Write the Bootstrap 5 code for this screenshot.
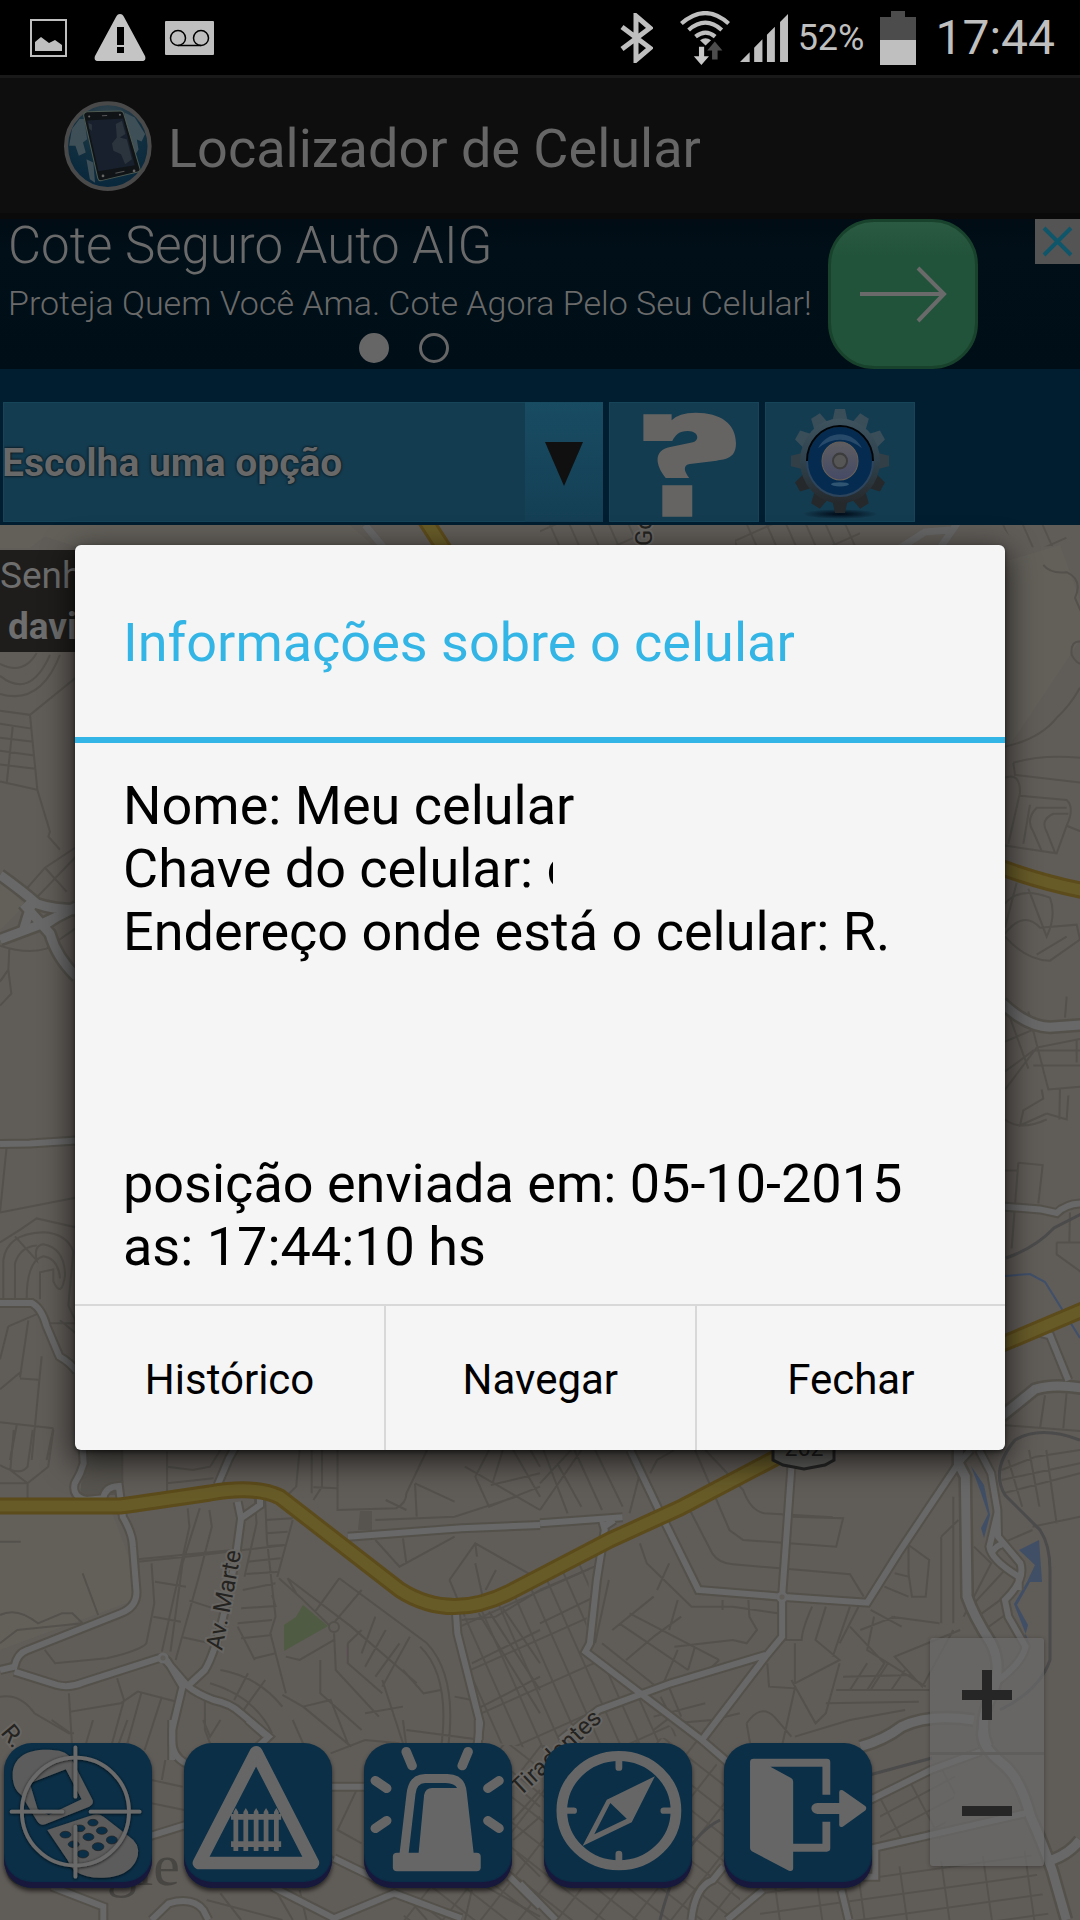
<!DOCTYPE html>
<html lang="pt-BR">
<head>
<meta charset="utf-8">
<meta name="viewport" content="width=device-width, initial-scale=1">
<title>Localizador de Celular</title>
<link href="https://cdn.jsdelivr.net/npm/bootstrap@5.3.0/dist/css/bootstrap.min.css" rel="stylesheet">
<style>
  body { font-family: Roboto, "Noto Sans", sans-serif; background: #000; color: #666; }
  button, select { font-family: inherit; }
  svg { display: block; flex: none; }

  .statusbar { height: 75px; color: #bfbfbf; background: #000; padding: 0 25px 0 30px; }
  .statusbar .battery-text { font-size: 36px; line-height: 42px; }
  .statusbar .clock { font-size: 48px; line-height: 56px; }
  .gap-s { margin-left: 10px; }
  .gap-m { margin-left: 19px; }
  .gap-l { margin-left: 27px; }

  .appbar { height: 144px; background: #0e0e0e; border-top: 3px solid #191919; border-bottom: 6px solid #0a0a0a; padding-left: 64px; }
  .appbar h1 { font-size: 54px; line-height: 64px; font-weight: 400; padding-top: 6px; }

  .ad { height: 150px; background: linear-gradient(#010c14, #010f18 30px, #000e17); color: #6a6a6a; }
  .ad a { color: inherit; font-weight: 300; padding-left: 8px; }
  .ad-title { font-size: 51px; line-height: 54px; }
  .ad-line { font-size: 34px; line-height: 40px; padding-top: 10px; }
  .ad-go { width: 150px; height: 150px; border-radius: 46px; background: linear-gradient(#2b5a42, #21523a 34px); border: 3px solid #18422c; }
  .ad-close { width: 45px; height: 45px; background: #545454; }
  .ad-dots { gap: 30px; padding: 10px 12px 0 0; }
  .ad-dots i { width: 30px; height: 30px; border-radius: 50%; border: 3px solid #666; }
  .ad-dots i.on { background: #666; }

  .toolbar { height: 156px; background: #001e30; padding: 33px 3px 3px; gap: 6px; }
  .toolbar .tile { height: 120px; background: #143c50; border: 1px solid #16455a; border-radius: 0; }
  .toolbar .tile-sq { width: 150px; }
  .picker { width: 600px; }
  .picker select { appearance: none; width: 100%; color: #686868; font-size: 39px; font-weight: 700; padding: 3px 80px 0 0; text-indent: -2px; text-shadow: 0 0 3px #000; outline-offset: -2px; }
  .picker .arrow { width: 78px; background: linear-gradient(#184c63, #143f54); pointer-events: none; padding-top: 4px; }

  .map-area { background: #605c58; min-height: 1000px; }
  .map-svg path:not(.solid) { fill: none; vector-effect: non-scaling-stroke; }
  .minor path { stroke: #54514c; stroke-width: 2px; }
  .casing { stroke: #54514b; stroke-width: 10px; }
  .core { stroke: #686868; stroke-width: 6px; }
  .big .casing { stroke-width: 14px; }
  .big .core { stroke-width: 9px; }
  .hw .casing { stroke: #5c4b1b; stroke-width: 17px; }
  .hw .core { stroke: #675b28; stroke-width: 11px; }
  .map-label { fill: #24231f; stroke: #686663; stroke-width: 4px; paint-order: stroke; font-size: 24px; }

  .user-tag { top: 25px; left: 0; width: 300px; height: 102px; background: rgba(20, 19, 18, .86); color: #6e6e6e; font-size: 37px; line-height: 51px; }

  .actions { left: 4px; bottom: 26px; gap: 32px; }
  .actions .act { width: 148px; height: 151px; filter: drop-shadow(0 3px 2px rgba(0, 0, 0, .6)); }
  .act-face { border-radius: 28px; background: #0a2f47; box-shadow: inset 0 -6px 1px #18173c; height: 145px; margin-bottom: 6px; overflow: hidden; }
  .zoomer { right: 36px; bottom: 54px; width: 114px; background: rgba(107, 107, 107, .68); border-radius: 3px; box-shadow: 0 1px 4px rgba(0, 0, 0, .3); }
  .zoomer button { height: 114px; }
  .zoomer button + button { border-top: 3px solid #5f5e5c !important; }

  .veil { padding: 75px 75px 0; }
  .dialog-box { width: 100%; background: #f5f5f5; color: #000; border-radius: 6px; box-shadow: 0 9px 30px 3px rgba(0, 0, 0, .65), 0 2px 4px rgba(0, 0, 0, .5); }
  .dialog-title { height: 198px; padding: 4px 48px 0; border-bottom: 6px solid #33b5e5; color: #33b5e5; font-size: 54px; line-height: 64px; font-weight: 400; }
  .dialog-text { padding: 31px 48px 26px; font-size: 54px; line-height: 63px; }
  .clip-char { display: inline-block; width: 7px; height: 63px; overflow: hidden; vertical-align: bottom; }
  .dialog-actions { border-top: 2px solid #d8d8d8; }
  .dialog-actions button { height: 144px; font-size: 42px; line-height: 50px; background: none; color: #000; padding-top: 4px; }
  .dialog-actions button + button { border-left: 2px solid #d8d8d8 !important; }
</style>
<script src="https://cdn.jsdelivr.net/npm/bootstrap@5.3.0/dist/js/bootstrap.bundle.min.js"></script>
</head>
<body>
<div class="position-relative d-flex flex-column min-vh-100 overflow-hidden">

  <!-- Status bar -->
  <div class="statusbar d-flex align-items-center justify-content-between">
    <div class="d-flex align-items-center">
      <svg width="37" height="38" viewBox="0 0 37 38"><path d="M1 1h35v36H1z" fill="none" stroke="#bfbfbf" stroke-width="2"/><path d="M5 32V23l6-5 8 6 6-3 7 5v6z" fill="#bfbfbf"/></svg>
      <svg class="gap-l" width="52" height="47" viewBox="3 0 52 47"><path d="M29 0c2 0 3 1 4 3l21 39c1 3 0 5-3 5H7c-3 0-4-2-3-5L25 3c1-2 2-3 4-3z" fill="#c4c4c4"/><path d="M26 13h7v18h-7zM26 33h7v6h-7z" fill="#000"/></svg>
      <svg class="gap-m" width="49" height="34" viewBox="0 0 49 34"><rect width="49" height="34" rx="1" fill="#bfbfbf"/><g fill="none" stroke="#000" stroke-width="1.5"><circle cx="13" cy="17" r="7.5"/><circle cx="36" cy="17" r="7.5"/><path d="M13 24.500h23"/></g></svg>
    </div>
    <div class="d-flex align-items-center">
      <svg width="33" height="50" viewBox="0 0 33 50"><path d="M2 14l28 21-14 12V3l14 12L2 36" fill="none" stroke="#bfbfbf" stroke-width="5"/></svg>
      <svg class="gap-l" width="50" height="54" viewBox="412 30 145 160" preserveAspectRatio="none"><g fill="none" stroke="#bfbfbf" stroke-width="12"><path d="M416 67q70-62 137 0M437 86q49-43 96 0M457 106q29-24 57 0"/></g><path d="M470 117q16-13 32 0l-16 15z" fill="#bfbfbf"/><path d="M467 136h15v28h14l-22 26-22-26h15z" fill="#c8c8c8"/><path d="M513 120l22 27h-14v27h-16v-27h-14z" fill="#4c4c4c"/></svg>
      <svg class="gap-s" width="48" height="48" viewBox="590 39 139 144" preserveAspectRatio="none"><path d="M590 183l28-29v29zM631 183v-43l24-25v68zM668 183v-82l23-24v106zM706 183V63l23-24v144z" fill="#bfbfbf"/></svg>
      <span class="battery-text gap-s">52%</span>
      <svg class="ms-3" width="36" height="54" viewBox="0 0 36 54"><path d="M11 0h14v6h11v23H0V6h11z" fill="#4c4c4c"/><path d="M0 29h36v25H0z" fill="#bfbfbf"/></svg>
      <span class="clock gap-m">17:44</span>
    </div>
  </div>

  <!-- App bar -->
  <header class="appbar d-flex align-items-center">
    <svg width="88" height="90" viewBox="185 306 255 269" preserveAspectRatio="none">
      <defs><radialGradient id="globe" cx=".5" cy=".2" r=".8"><stop offset="0" stop-color="#3a4850"/><stop offset=".5" stop-color="#12303f"/><stop offset="1" stop-color="#08273c"/></radialGradient></defs>
      <ellipse cx="312" cy="441" rx="121" ry="128" fill="url(#globe)" stroke="#4a494a" stroke-width="12"/>
      <path d="M200 440l8-50 22-30 14 0 8 60-12 10 8 30-20 10-10-30zM360 340l30 15 30 50-10 22-14-6 5 30-12 20-20-60zM250 480l20 10 5 60-15-10z" fill="#3f4f57"/>
      <path d="M252 338l96-2q8 0 10 8l47 164q2 8-6 10l-106 26q-8 1-10-7L242 350q-1-10 10-12z" fill="#111416" stroke="#4d5a52" stroke-width="3"/>
      <path d="M252 364l104-6 34 140-105 18z" fill="#17202c"/>
      <path d="M335 375l18-10 10 40-16 10 20 5 15 60-20 15-12-30-22-10-4-22 14-18zM256 372l10 4v20l-8-8z" fill="#2b333c"/>
      <path d="M295 350l15-1M334 522l26-6" stroke="#555" stroke-width="3"/>
      <g fill="#666"><circle cx="258" cy="352" r="3"/><circle cx="347" cy="347" r="3"/><circle cx="298" cy="530" r="4"/><circle cx="388" cy="515" r="4"/></g>
    </svg>
    <h1 class="mb-0 ms-3">Localizador de Celular</h1>
  </header>

  <!-- Banner -->
  <section class="ad d-flex align-items-start">
    <a href="#" class="text-decoration-none d-block">
      <div class="ad-title">Cote Seguro Auto AIG</div>
      <div class="ad-line">Proteja Quem Você Ama. Cote Agora Pelo Seu Celular!</div>
      <div class="ad-dots d-flex justify-content-center"><i class="on"></i><i></i></div>
    </a>
    <button type="button" class="ad-go p-0 ms-3" aria-label="Abrir">
      <svg width="144" height="144" viewBox="0 0 144 144" fill="none" stroke="#6a6a6a" stroke-width="4"><path d="M29 72h83M87 46l26 26-26 27"/></svg>
    </button>
    <button type="button" class="ad-close border-0 p-0 ms-auto" aria-label="Fechar propaganda">
      <svg width="45" height="45" viewBox="0 0 45 45" stroke="#0f566b" stroke-width="4"><path d="M9 9l27 27M36 9L9 36"/></svg>
    </button>
  </section>

  <!-- Toolbar -->
  <div class="toolbar d-flex">
    <div class="picker position-relative">
      <select class="tile" aria-label="Opção"><option>Escolha uma opção</option></select>
      <span class="arrow position-absolute top-0 end-0 bottom-0 d-flex align-items-center justify-content-center"><svg width="38" height="44" viewBox="0 0 38 44"><path d="M0 0h38L19 44z" fill="#101010"/></svg></span>
    </div>
    <button type="button" class="tile tile-sq p-0" aria-label="Ajuda">
      <svg width="148" height="118" viewBox="203 564 430 354" preserveAspectRatio="none"><path d="M300 598h82v18q20-23 70-23c72 0 117 33 117 92 0 45-30 48-56 52l-78 10c-18 3-20 18-2 42h-68c-35-45-32-84 13-93l66-14c20-7 17-34-15-34-26 0-36 12-45 30h-84zM355 811h87v94h-87z" fill="#666462"/></svg>
    </button>
    <button type="button" class="tile tile-sq p-0" aria-label="Configurações">
      <svg width="148" height="118" viewBox="0 0 148 118">
        <defs>
          <linearGradient id="gearFill" gradientUnits="userSpaceOnUse" x1="0" y1="-45" x2="0" y2="45"><stop offset="0" stop-color="#405560"/><stop offset=".5" stop-color="#2f424d"/><stop offset="1" stop-color="#242628"/></linearGradient>
          <linearGradient id="hub" x1="0" y1="0" x2="0" y2="1"><stop offset="0" stop-color="#5d5d60"/><stop offset="1" stop-color="#454a66"/></linearGradient>
          <radialGradient id="gearShade"><stop offset="0" stop-color="#000916"/><stop offset="1" stop-color="#000916" stop-opacity="0"/></radialGradient>
          <path id="tooth" d="M-8-36L-5-49H5L8-36z"/>
        </defs>
        <ellipse cx="74" cy="111" rx="38" ry="5" fill="url(#gearShade)"/>
        <g transform="translate(74 58) scale(1 1.060)">
          <g fill="#3a4e59"><use href="#tooth"/><use href="#tooth" transform="rotate(30)"/><use href="#tooth" transform="rotate(330)"/><use href="#tooth" transform="rotate(60)"/><use href="#tooth" transform="rotate(300)"/></g>
          <g fill="#333f47"><use href="#tooth" transform="rotate(90)"/><use href="#tooth" transform="rotate(270)"/></g>
          <g fill="#26292b"><use href="#tooth" transform="rotate(120)"/><use href="#tooth" transform="rotate(150)"/><use href="#tooth" transform="rotate(180)"/><use href="#tooth" transform="rotate(210)"/><use href="#tooth" transform="rotate(240)"/></g>
          <circle r="40" fill="url(#gearFill)"/>
          <circle r="33" fill="#052c50" stroke="#2c445c" stroke-width="2"/>
          <path d="M-33 0A33 33 0 0 1 33 0" fill="none" stroke="#020508" stroke-width="2"/>
          <path d="M-22-12A25 25 0 0 1 22-12Q0-28-22-12z" fill="#27496a"/>
          <circle r="18" fill="url(#hub)" stroke="#6a6056" stroke-width="1"/>
          <circle r="7" fill="#565656" stroke="#3c3c3c" stroke-width="2"/>
          <ellipse cy="22" rx="9" ry="2" fill="#2f5573"/>
        </g>
      </svg>
    </button>
  </div>

  <!-- Map -->
  <main class="map-area position-relative flex-grow-1 overflow-hidden">
    <svg class="map-svg position-absolute top-0 start-0 w-100 h-100" viewBox="0 525 1080 1395" preserveAspectRatio="xMidYMid slice">
      <defs>
        <pattern id="gridA" width="34" height="18" patternUnits="userSpaceOnUse" patternTransform="rotate(-28)"><path class="solid" d="M0 1H34M1 0V18" stroke="#55524d" stroke-width="2"/></pattern>
        <pattern id="gridB" width="18" height="44" patternUnits="userSpaceOnUse" patternTransform="rotate(-24)"><path class="solid" d="M0 1H18M1 0V44" stroke="#55524d" stroke-width="2"/></pattern>
        <pattern id="gridC" width="30" height="20" patternUnits="userSpaceOnUse" patternTransform="rotate(38)"><path class="solid" d="M0 1H30M1 0V20" stroke="#55524d" stroke-width="2"/></pattern>
        <pattern id="gridD" width="42" height="20" patternUnits="userSpaceOnUse" patternTransform="rotate(-8)"><path class="solid" d="M0 1H42M1 0V20" stroke="#55524d" stroke-width="2"/></pattern>
        <g id="roadsSW" transform="matrix(.3444 0 0 .3333 0 1430)">
          <path d="M240 50L243 100Q235 130 217 160Q208 200 250 210L300 205Q305 170 345 168L352 225L357 262Q385 310 386 350L396 480Q400 530 350 550L80 660Q50 670 42 710L0 720M42 725L165 765Q200 775 240 758L460 685Q480 680 490 700L530 770L500 900V990M480 690L545 768Q570 790 620 810Q670 820 700 850L780 920L740 960M545 768L595 720Q625 670 655 530L685 380L700 265L690 215M700 265L755 225V200M632 165L665 85L690 40M1010 320L1340 295L1568 285M1324 550L1328 610L1394 880L1385 960"/>
        </g>
        <g id="roadsSE" transform="matrix(.3444 0 0 .3333 540 1430)">
          <path d="M0 280L240 262M180 270L188 300L165 450L145 640L132 665L470 930L560 1010M215 270L186 290M262 60L345 240L460 480L700 500L950 518L1040 370L1215 100M730 110L703 500V620L655 680L470 930M655 675L380 760L170 840L60 930"/>
        </g>
        <g id="roadsE" transform="matrix(.3444 0 0 .3333 540 1430)">
          <path d="M1215 60V100L1235 140L1240 500Q1260 560 1310 640Q1345 710 1310 800Q1270 880 1300 950M930 950Q1000 930 1050 890Q1130 850 1260 870"/>
        </g>
        <g id="roadsE2" transform="matrix(.3444 0 0 .3333 540 1430)">
          <path d="M1215 100L1250 60M1275 60L1310 130L1328 240L1330 320L1395 400Q1410 450 1350 510L1360 560L1410 650Q1400 700 1320 760M1328 250L1305 350Q1310 390 1390 440V480M1310 370Q1330 340 1345 345"/>
        </g>
        <g id="roadsSEb" transform="matrix(.3571 0 0 .3333 520 1600)">
          <path d="M1300 380Q1280 430 1350 490Q1400 530 1430 650Q1460 720 1490 810L1530 960M1490 780Q1540 760 1568 720"/>
        </g>
        <g id="roadsSEc" transform="matrix(.3571 0 0 .3333 520 1600)">
          <path d="M980 600L1150 510L1290 455M985 745L1415 640M900 870L920 960M680 870L580 960M480 960Q490 860 540 840L570 800M0 850L100 960M995 750V830H960"/>
        </g>
        <g id="roadsBL" transform="matrix(.3444 0 0 .3333 0 1720)">
          <path d="M500 0V60Q500 110 540 130M720 0L770 45M430 350L540 315M960 200H1060M970 415L1100 480M790 500L970 595L1145 520L1300 580L1340 595M150 500L300 560V600M440 600L490 550Q560 530 590 570L605 600M1480 470L1568 560M1390 0V60"/>
        </g>
        <g id="roadsW" transform="matrix(.3333 0 0 .5995 0 520)">
          <path d="M0 592Q70 620 110 640Q160 650 235 650M0 700L120 675Q180 660 230 645M70 640L150 690Q170 730 230 762M70 685L95 640M120 680L190 655"/>
        </g>
        <g id="roadsW2" transform="matrix(.3333 0 0 .5995 0 520)">
          <path d="M0 1041L90 1040L230 1035M0 1306H95Q125 1315 140 1345L178 1395Q210 1405 230 1420"/>
        </g>
        <g id="roadsNE" transform="matrix(.3333 0 0 .5995 960 520)">
          <path d="M125 805Q200 845 270 846L365 842M125 1495L225 1450Q280 1440 365 1448"/>
        </g>
        <g id="roadsNE2" transform="matrix(.3333 0 0 .5995 960 520)">
          <path d="M125 1145L240 1150L290 1156Q320 1140 365 1140M235 1355L270 1360L325 1435"/>
        </g>
        <g id="highway">
          <path d="M0 1506H120Q150 1502 210 1493Q255 1485 280 1497L400 1590Q450 1622 510 1592L610 1540L680 1508L785 1453M424 518L446 552M1000 867Q1040 882 1085 891M1000 1345L1085 1309"/>
        </g>
      </defs>

      <!-- land use -->
      <g>
        <path class="solid" fill="#63605a" d="M0 1513H112L130 1560 135 1600 0 1650z"/>
        <path class="solid" fill="#63605a" d="M1010 560L1060 545 1080 600V640L1010 745zM0 525H60L30 548H0zM10 525H350L376 548H80z"/>
        <path class="solid" fill="#63605a" d="M0 880L25 905 0 930z"/>
        <path class="solid" fill="#505b43" d="M303 1605L328 1626 284 1651V1625L296 1617z"/>
        <path class="solid" fill="#57544f" d="M85 1450H122V1495H80zM360 1511H372V1530H358z"/>
      </g>

      <!-- dense blocks -->
      <g>
        <path class="solid" fill="url(#gridB)" d="M460 1620L590 1560 585 1650 680 1735 600 1760 480 1740z"/>
        <path class="solid" fill="url(#gridC)" d="M465 1745H600L690 1735 740 1790V1920H400L460 1850z"/>
        <path class="solid" fill="url(#gridD)" d="M760 1890L870 1870 1030 1850 1050 1920H760z"/>
        <path class="solid" fill="url(#gridB)" d="M540 525H645V548H540zM735 525H860V548H735zM1000 525H1060L1070 545 1020 548z"/>
        <path class="solid" fill="url(#gridA)" d="M880 1800L940 1765 960 1780 940 1840 880 1850z"/>
      </g>

      <!-- local streets -->
      <g class="minor">
        <g transform="matrix(.3333 0 0 .5995 0 520)"><path d="M0 260Q90 300 150 225M0 290Q120 310 180 225M0 240Q70 260 110 222M0 318L90 325L230 262M90 325L112 450L150 520L145 528L180 550M0 340L95 348M0 363L100 370M0 385L103 393M0 408L106 415M0 436L112 450M38 345L20 440M80 615L135 580L230 545M135 580L200 620M230 560L110 630M0 710Q80 725 140 715L230 680M28 715L25 750L0 770M25 750L34 790L0 810M20 1045L0 1155L230 1130M0 1205Q60 1185 110 1165L230 1180M45 1195L110 1235Q100 1210 130 1208Q195 1215 195 1260Q185 1300 160 1270V1250L120 1255V1300M10 1300V1235Q20 1190 130 1188Q200 1190 220 1220L205 1310L230 1340H130M45 1300V1240Q60 1212 110 1210M80 1300Q80 1235 130 1228Q175 1232 180 1265M25 1345L130 1320M25 1345L0 1400M85 1335L60 1430M65 1420L0 1450M60 1432L115 1434M125 1395L95 1568M160 1515L140 1568M160 1515L0 1505M50 1510L30 1568M235 1360L180 1335"/></g>
        <g transform="matrix(.3333 0 0 .5995 960 520)"><path d="M135 378Q240 365 290 330Q330 310 360 280M250 75Q270 90 320 87Q370 100 345 130L365 155M365 203Q330 200 335 225Q350 240 365 240M160 405Q250 390 365 397M160 405L165 425L365 438M135 430Q180 420 180 455L145 540M180 460L320 467Q345 480 320 510L290 556L135 543M320 480H230Q195 500 220 520L245 552M325 490H280Q240 500 260 520L285 555M210 475L190 540M320 510L365 520M135 640Q180 610 270 630Q290 660 260 695L205 615M135 680L170 605M135 690Q190 650 240 680L350 675L360 700L270 735Q200 735 135 695M230 725L320 695M150 830L205 915M205 820L265 950L365 945M135 870L220 850M135 950L230 880L365 865M135 920L220 885H365M220 910H365M260 990L180 1010L190 985L250 965L245 950M300 950L298 1000M325 960L320 1000L260 990M135 1000Q180 1020 260 1000M175 1072L248 1076L235 1140M175 1072L155 1215M135 1085H170M330 1155L328 1205M290 1205H365M290 1205V1225L365 1255M135 1510L365 1520M255 1460L240 1515M320 1455L310 1515M350 865V905M320 795L315 830"/></g>
        <g transform="matrix(.3444 0 0 .3333 0 1430)"><path d="M0 105Q60 140 80 110L95 0M40 0L30 120L80 160L140 110L155 0M0 160H80V205M355 50V160M485 65V185M485 110L560 120L610 110L640 60M485 160L620 145M870 60L860 170L830 200M905 60V190M935 60V170L910 210M980 60V240L1150 235Q1180 220 1180 190L1240 60M910 172L980 175M1205 160L1320 215M1205 160L1210 260M400 395L560 378L830 345M400 388L700 358M440 400L448 520L425 640Q410 660 310 685L160 700L130 660M545 235L550 290L470 665M580 235L530 400L495 665M608 240L615 290L575 450L510 690M450 455L540 470M445 560L525 575M550 512L650 545M530 622L610 640M740 205L745 280L710 440M770 210L775 330L800 560L785 610L830 790M850 270L805 440M770 270L850 265M775 310L835 305M780 348L825 345M720 395L815 385M715 432L810 425M705 480L800 460M700 535L800 528L790 495M690 580L790 570M700 625L790 615M690 590L740 690M740 685L800 670M835 445L1020 590L1210 760M835 445L860 490M810 445L870 500L960 590M985 445L915 545M985 445L1240 640M1050 480L960 590M1050 600L1010 640M1090 560L1050 670M1120 600L1060 710M1160 640L1090 740M1190 620L1110 770M640 720Q750 740 820 830M610 760Q740 800 790 910M720 730L680 810M770 750L700 850M820 795L880 830L1020 950M595 790V900L610 940M0 555Q50 530 110 580L180 550H210L240 580M0 640L50 600L240 580M0 800Q60 790 100 850L200 910H215M200 790L210 960M205 845L350 820L400 785L530 820M340 745L360 810L320 960M410 790L370 940M470 800L420 960M240 430L285 555M0 335H60M930 690V790L1050 900M970 610L975 720L1100 860M1010 640V700L1110 790M880 830L960 810L1010 940M830 680L870 690L970 630M1110 750L1170 940M1240 640Q1330 740 1300 960M1220 650Q1310 740 1280 960M1320 800L1370 810M1180 900L1400 930M1060 850L1170 830M1170 720L1230 790L1280 780M1340 570L1440 560L1568 480M1390 550L1568 850M1420 545L1568 780M1460 535L1568 700M1380 840L1568 740M1370 700L1568 600M1305 450L1380 340L1568 450M1380 400L1410 540M1380 340L1385 380M1305 450L1350 560M1440 420L1410 480M1120 210L1180 240M1090 270L1320 260L1500 200M1090 330L1160 410L1320 320M1170 325L1180 400M1350 110L1568 240M1420 60L1380 140L1420 230L1568 170M1460 60L1430 160M1490 60L1568 200M1540 60L1568 110M1425 165L1568 130"/></g>
        <g transform="matrix(.3444 0 0 .3333 540 1430)"><path d="M450 60L550 300L590 330L860 350L880 265L730 260M480 60L590 180Q610 240 650 250L850 262M420 210L500 370Q520 400 560 403L900 433L940 500M320 130L340 90L390 60M0 240L120 60M0 160L90 60M10 60L80 250M50 100L120 230M100 60L180 240M160 60L240 230M260 250L290 130M290 340L310 400L440 530H560L690 550M375 400L340 480M400 510L375 600M530 510V540M605 510L608 560L630 600L600 640L560 630L390 650M200 450L160 640M0 480L180 400M0 580L160 500M210 600L330 500M180 640L350 780M230 580L430 720M260 550L520 690M330 620L410 560M250 690L330 620M400 660L350 780M450 650L430 720M790 530Q760 600 760 630H700M830 530L800 630L870 690L740 760V640M900 530L850 680M930 520L870 640M1070 345L1130 390L1120 500L1080 500L1070 430V345M1070 440L1030 430M1165 320V580M1200 200V580M1165 320L1215 270M1220 600L1030 680L1110 770L1200 600M1020 560L1160 580M970 560L950 660L1120 770M900 590L1000 700L950 780M1260 350L1310 400L1230 560M1260 520L1350 420M1270 560L1350 500M1290 600L1370 540M1000 470L1070 500M960 540L1050 590M930 600L1030 560M870 700L830 850L800 880L730 750M860 780H1130M830 820L1100 815M880 740L1080 735M900 780L950 700M960 780L1010 700M1020 780L1060 720M740 920L900 870L1060 840M660 700L665 770L740 775L700 960M600 880Q640 820 680 860L730 920M600 880L610 940M330 860L480 820M390 880L500 870L580 850M410 860L370 760M520 690L470 740M350 800L380 860L330 900M1340 120L1440 80L1568 60M1345 190L1568 130M1360 90L1400 230M1420 60L1450 230M1470 60L1500 280M1340 150L1568 100M1430 290L1568 260M1340 340L1430 300"/></g>
        <g transform="matrix(.3444 0 0 .3333 0 1720)"><path d="M150 0L205 40M270 0L250 70M370 0L345 70M590 0L610 50L640 0M850 0L880 70M960 100L1060 60L1160 70M1170 0L1180 80M440 180L530 200M440 250L535 270M480 120L470 180M800 510L850 600M870 510L890 600M950 400L1040 460M1040 200L980 330L1050 370M1500 200L1568 260M1490 300L1568 210M1490 360L1568 290M1500 400L1568 470M640 520L700 600M600 540L820 600M1180 530L1240 600M1370 510L1350 600M1410 500L1568 590"/></g>
      </g>
      <path d="M1006 1258Q1035 1248 1054 1228L1085 1212M1080 1440Q1040 1425 1015 1440Q990 1470 1005 1495L1040 1530Q1050 1545 1050 1570V1660Q1040 1690 1000 1710M862 1777L932 1758M660 1920Q680 1840 720 1820" stroke="#4b4b4b" stroke-width="3"/>

      <!-- river -->
      <path d="M1005 1276L1030 1274 1045 1282 1080 1338" stroke="#40506a" stroke-width="2"/>
      <path class="solid" fill="#404f66" d="M971 1466L984 1485 990 1515 984 1538 981 1528 988 1514 980 1490zM1019 1550L1039 1540 1042 1582H1030L1017 1605 1028 1625 1024 1640 1030 1645 1025 1632 1014 1604 1027 1582 1035 1565zM1006 1405L1030 1391 1006 1413z"/>

      <g>
        <use href="#roadsSW" class="casing"/><use href="#roadsSE" class="casing"/><use href="#roadsE2" class="casing"/><use href="#roadsSEc" class="casing"/><use href="#roadsBL" class="casing"/><use href="#roadsW2" class="casing"/><use href="#roadsNE2" class="casing"/>
        <g class="big"><use href="#roadsE" class="casing"/><use href="#roadsSEb" class="casing"/><use href="#roadsW" class="casing"/><use href="#roadsNE" class="casing"/></g>
        <use href="#roadsSW" class="core"/><use href="#roadsSE" class="core"/><use href="#roadsE2" class="core"/><use href="#roadsSEc" class="core"/><use href="#roadsBL" class="core"/><use href="#roadsW2" class="core"/><use href="#roadsNE2" class="core"/>
        <g class="big"><use href="#roadsE" class="core"/><use href="#roadsSEb" class="core"/><use href="#roadsW" class="core"/><use href="#roadsNE" class="core"/></g>
        <path d="M365 525L384 548M900 548L925 532 950 530M958 522L940 548" stroke="#666" stroke-width="7"/>
        <g class="hw"><use href="#highway" class="casing"/><use href="#highway" class="core"/></g>
      </g>
      <circle cx="163" cy="1658" r="4" fill="#605c58" stroke="#686868" stroke-width="3"/>
      <circle cx="782" cy="1597" r="4" fill="#605c58" stroke="#686868" stroke-width="3"/>
      <circle cx="334" cy="1627" r="5" fill="#605c58" stroke="#54514c" stroke-width="2"/>
      <path class="solid" d="M773 1440V1460L783 1465 804 1469 825 1465 834 1460V1440z" fill="#5f5f5c" stroke="#262626" stroke-width="3"/>
      <text x="804" y="1456" text-anchor="middle" font-size="23" fill="#222">262</text>
      <text class="map-label" transform="translate(222 1651) rotate(-79)">Av. Marte</text>
      <text class="map-label" transform="translate(520 1797) rotate(-43)">Tiradentes</text>
      <text class="map-label" transform="translate(0 1733) rotate(50)">R. J</text>
      <text class="map-label" transform="translate(652 546) rotate(-90)">Go</text>
      <text x="180" y="1885" text-anchor="end" font-size="60" fill="#484643" font-family="'Liberation Serif', serif">Google</text>
    </svg>

    <div class="user-tag position-absolute">
      <div>Senh</div>
      <div class="fw-bold ps-2">davi</div>
    </div>

    <div class="actions position-absolute d-flex">
      <button type="button" class="act border-0 bg-transparent p-0" aria-label="Localizar celular"><span class="act-face d-block">
        <svg width="148" height="145" viewBox="10 69 431 435" preserveAspectRatio="none">
          <defs><filter id="soft" x="-10%" y="-10%" width="120%" height="120%"><feDropShadow dx="0" dy="2" stdDeviation="4" flood-color="#000" flood-opacity=".8"/></filter></defs>
          <g filter="url(#soft)" fill="#5c5c5c">
            <path fill-rule="evenodd" d="M36 180C28 110 80 85 150 90Q195 92 208 120L268 240Q272 252 258 260L130 313Q115 318 106 302L60 225Q40 210 36 180zM85 190L190 148 236 238 140 285 108 268z"/>
            <path d="M136 330L270 284Q285 280 300 290L375 350Q405 370 400 405C390 450 350 472 300 473Q250 475 220 455Q205 445 195 420z"/>
          </g>
          <g fill="#0a2f47" stroke="#222" stroke-width="2"><ellipse cx="189" cy="344" rx="16" ry="10"/><ellipse cx="231" cy="325" rx="15" ry="10"/><ellipse cx="269" cy="308" rx="15" ry="10"/><ellipse cx="213" cy="373" rx="16" ry="10"/><ellipse cx="256" cy="351" rx="16" ry="11"/><ellipse cx="295" cy="332" rx="16" ry="11"/><ellipse cx="240" cy="402" rx="17" ry="12"/><ellipse cx="284" cy="380" rx="17" ry="12"/><ellipse cx="324" cy="360" rx="16" ry="12"/></g>
          <g fill="none" stroke="#6a6a6a" stroke-width="11" stroke-linecap="round" filter="url(#soft)"><ellipse cx="218" cy="275" rx="156" ry="162"/><path d="M218 82V230M218 320V470M32 275H180M262 275H405"/></g>
        </svg></span></button>
      <button type="button" class="act border-0 bg-transparent p-0" aria-label="Cerca virtual"><span class="act-face d-block">
        <svg width="148" height="145" viewBox="533 69 431 435" preserveAspectRatio="none">
          <path d="M743 97L577 429H908z" fill="none" stroke="#666" stroke-width="38" stroke-linejoin="round"/>
          <g fill="#666"><path d="M670 282H816V299H670zM670 364H816V381H670z"/><path d="M677 393V276l7-12 7 12V393zM706 393V276l7-12 7 12V393zM736 393V276l7-12 7 12V393zM765 393V276l7-12 7 12V393zM795 393V276l7-12 7 12V393z"/></g>
        </svg></span></button>
      <button type="button" class="act border-0 bg-transparent p-0" aria-label="Alarme"><span class="act-face d-block">
        <svg width="148" height="145" viewBox="1057 69 431 435" preserveAspectRatio="none">
          <g fill="#666"><rect x="1141" y="398" width="256" height="56" rx="12"/><path fill-rule="evenodd" d="M1160 405L1181 220Q1188 162 1235 162H1300Q1350 162 1356 215L1377 405zM1187 400H1216L1232 225Q1236 204 1255 204H1328Q1322 190 1295 189H1235Q1210 190 1207 222z"/></g>
          <path d="M1180 95L1197 137M1360 95L1343 137M1090 182L1123 205M1450 182L1418 205M1090 325L1123 302M1450 325L1418 302" stroke="#666" stroke-width="28" stroke-linecap="round"/>
        </svg></span></button>
      <button type="button" class="act border-0 bg-transparent p-0" aria-label="Bússola"><span class="act-face d-block">
        <svg width="148" height="145" viewBox="66 430 415 435" preserveAspectRatio="none">
          <ellipse cx="276" cy="633" rx="160" ry="164" fill="none" stroke="#666" stroke-width="30"/>
          <path d="M276 480V504M276 763V790M125 633H149M402 633H425" stroke="#666" stroke-width="19" stroke-linecap="round"/>
          <path fill-rule="evenodd" d="M377 530L312 668 174 739 242 600zM252 610L298 657 207 704z" fill="#666"/>
        </svg></span></button>
      <button type="button" class="act border-0 bg-transparent p-0" aria-label="Sair"><span class="act-face d-block">
        <svg width="148" height="145" viewBox="570 430 415 435" preserveAspectRatio="none">
          <g fill="#666"><path d="M643 487Q643 477 653 477H858Q868 477 868 487V585H846V501H700L758 535Q764 539 764 546V732H846V666H868V746Q868 756 858 756H764V805Q764 816 752 813L648 755Q643 751 643 745z"/><path d="M832 610H893V578Q893 568 903 572L967 620Q972 626 967 632L903 681Q893 685 893 675V643H832Q815 640 815 626T832 610z"/></g>
        </svg></span></button>
    </div>

    <div class="zoomer position-absolute d-flex flex-column">
      <button type="button" class="border-0 bg-transparent p-0 d-flex align-items-center justify-content-center" aria-label="Aproximar"><svg width="50" height="50" viewBox="0 0 50 50"><path d="M20 0h10v20h20v10H30v20H20V30H0V20h20z" fill="#262626"/></svg></button>
      <button type="button" class="border-0 bg-transparent p-0 d-flex align-items-center justify-content-center" aria-label="Afastar"><svg width="50" height="10" viewBox="0 0 50 10"><path d="M0 0h50v10H0z" fill="#262626"/></svg></button>
    </div>
  </main>

  <!-- Dialog -->
  <div class="veil position-absolute top-0 start-0 end-0 bottom-0 d-flex align-items-center">
    <div class="dialog-box" role="dialog" aria-labelledby="dlgTitle">
      <h2 id="dlgTitle" class="dialog-title mb-0 d-flex align-items-center">Informações sobre o celular</h2>
      <div class="dialog-text">
        Nome: Meu celular<br>
        Chave do celular: <span class="clip-char">c</span><br>
        Endereço onde está o celular: R.<br><br><br><br>
        posição enviada em: 05-10-2015<br>
        as: 17:44:10 hs
      </div>
      <div class="dialog-actions d-flex">
        <button type="button" class="border-0 flex-fill w-100">Histórico</button>
        <button type="button" class="border-0 flex-fill w-100">Navegar</button>
        <button type="button" class="border-0 flex-fill w-100">Fechar</button>
      </div>
    </div>
  </div>
</div>
</body>
</html>
